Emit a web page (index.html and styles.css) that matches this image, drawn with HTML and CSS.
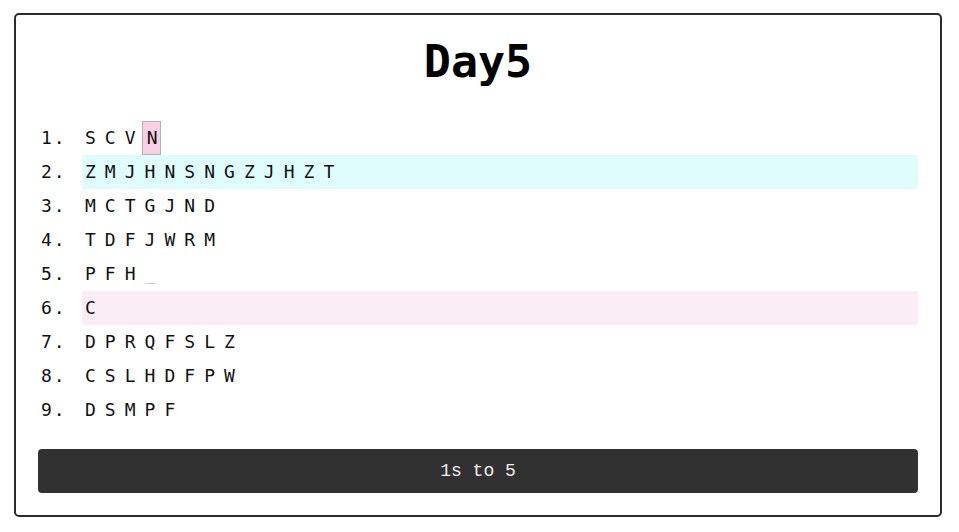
FILE: index.html
```html
<!DOCTYPE html>
<html>
<head>
<meta charset="utf-8">
<link rel="stylesheet" href="styles.css">
</head>
<body>
<div class="card">
  <h1 class="title">Day5</h1>
  <ol class="stacks">
    <li class="row"><span class="num">1.</span><span class="crates">S C V <span class="active">N</span></span></li>
    <li class="row"><span class="num">2.</span><span class="crates target">Z M J H N S N G Z J H Z T</span></li>
    <li class="row"><span class="num">3.</span><span class="crates">M C T G J N D</span></li>
    <li class="row"><span class="num">4.</span><span class="crates">T D F J W R M</span></li>
    <li class="row"><span class="num">5.</span><span class="crates">P F H <span class="hole">_</span></span></li>
    <li class="row"><span class="num">6.</span><span class="crates source">C</span></li>
    <li class="row"><span class="num">7.</span><span class="crates">D P R Q F S L Z</span></li>
    <li class="row"><span class="num">8.</span><span class="crates">C S L H D F P W</span></li>
    <li class="row"><span class="num">9.</span><span class="crates">D S M P F</span></li>
  </ol>
  <button class="step">1s to 5</button>
</div>
</body>
</html>
```

FILE: styles.css
```css
html, body {
  margin: 0;
  padding: 0;
  background: #ffffff;
}

body {
  padding: 13px 17px 0 14px;
}

.card {
  border: 2px solid #2b2b2b;
  border-radius: 5px;
  padding: 20px 22px 22px 22px;
  display: flex;
  flex-direction: column;
  height: 504px;
  box-sizing: border-box;
}

.title {
  margin: 0 0 32px 0;
  text-align: center;
  font-family: "DejaVu Sans Mono", monospace;
  font-weight: bold;
  font-size: 45px;
  line-height: 54px;
  color: #000;
}

.stacks {
  list-style: none;
  margin: 0;
  padding: 0;
  font-family: "DejaVu Sans Mono", monospace;
  font-size: 18px;
  color: #111;
}

.row {
  display: flex;
  height: 34px;
  line-height: 34px;
}

.num {
  width: 44px;
  box-sizing: border-box;
  padding-left: 3px;
  letter-spacing: 2px;
  flex: none;
}

.crates {
  flex: 1;
  padding-left: 3px;
  white-space: pre;
  letter-spacing: -0.9px;
}

.target {
  background: #e0fdfd;
}

.source {
  background: #fbedf6;
}

.active {
  display: inline-block;
  vertical-align: top;
  height: 32px;
  line-height: 32px;
  padding: 0 3px 0 4px;
  margin-left: -3px;
  border: 1px solid #b3b3b3;
  background: #f8cfe5;
}

.hole {
  color: #aaaaaa;
}

.step {
  margin-top: 22px;
  height: 44px;
  border: none;
  border-radius: 4px;
  background: #313131;
  color: #eeeeee;
  font-family: "Liberation Mono", monospace;
  font-size: 18px;
  cursor: pointer;
}
```
